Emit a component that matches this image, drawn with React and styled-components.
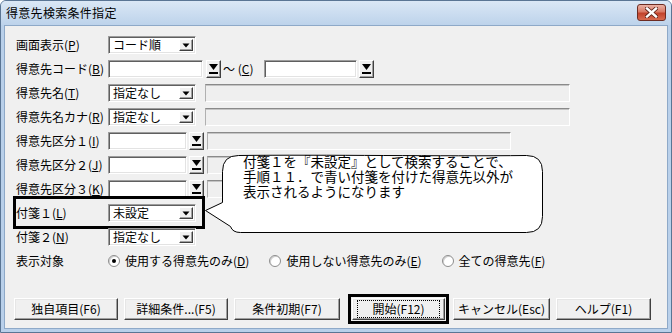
import React from "react";
import styled, { createGlobalStyle } from "styled-components";

const GlobalStyle = createGlobalStyle`
  html, body { margin: 0; padding: 0; background: #fff; }
  body {
    font-family: "Noto Sans CJK JP", "Liberation Sans", sans-serif;
    font-size: 12px;
    color: #000;
  }
`;

// window frame
const Window = styled.div`
  width: 672px;
  height: 333px;
  box-sizing: border-box;
  display: flex;
  flex-direction: column;
  border: 1px solid #5a7594;
  border-radius: 6px 6px 0 0;
  background: #b9d0ea;
  overflow: hidden;
`;

const TitleBar = styled.div`
  height: 24px;
  flex-shrink: 0;
  display: flex;
  align-items: center;
  justify-content: space-between;
  padding: 0 5px 0 5px;
  background: linear-gradient(#dae7f5, #bdd3eb);
`;

const Title = styled.span`
  font-size: 12px;
  letter-spacing: 0.3px;
  line-height: 1;
`;

const CloseBtn = styled.div`
  width: 29px;
  height: 17px;
  margin-top: -2px;
  box-sizing: border-box;
  border: 1px solid #6d2c22;
  border-radius: 3px;
  background: linear-gradient(#eab1a4 0%, #d97a66 45%, #c2432c 55%, #d86b50 100%);
  display: flex;
  align-items: center;
  justify-content: center;
`;

const Body = styled.div`
  position: relative;
  flex: 1;
  margin: 0 3px 3px 3px;
  border: 1px solid #8ea9c8;
  background: #f0f0f0;
  padding: 7px 0 0 11px;
`;

const Row = styled.div`
  position: relative;
  display: flex;
  align-items: center;
  height: 24px;
`;

const Label = styled.span`
  width: 92px;
  flex-shrink: 0;
  white-space: nowrap;
  line-height: 1;
`;

const sunken = `
  box-sizing: border-box;
  height: 18px;
  border: 1px solid;
  border-color: #9c9c9c #ffffff #ffffff #9c9c9c;
  box-shadow: inset 1px 1px #5f5f5f, inset -1px -1px #e3e3e3;
`;

const Combo = styled.div`
  ${sunken}
  width: ${(p) => p.w || 88}px;
  background: #fff;
  display: flex;
  align-items: center;
  padding: 0 2px 0 4px;
  line-height: 1;
`;

const ComboArrow = styled.div`
  margin-left: auto;
  width: 14px;
  height: 12px;
  box-sizing: border-box;
  background: #f0f0f0;
  border: 1px solid;
  border-color: #fff #404040 #404040 #fff;
  box-shadow: inset -1px -1px #a0a0a0;
  display: flex;
  align-items: center;
  justify-content: center;
`;

const TextBox = styled.div`
  ${sunken}
  width: ${(p) => p.w}px;
  background: #fff;
`;

const DropBtn = styled.div`
  width: 15px;
  height: 18px;
  margin-left: ${(p) => p.ml || 2}px;
  box-sizing: border-box;
  background: #f0f0f0;
  border: 1px solid;
  border-color: #fff #404040 #404040 #fff;
  box-shadow: inset -1px -1px #a0a0a0;
  display: flex;
  align-items: center;
  justify-content: center;
`;

const Field = styled.div`
  box-sizing: border-box;
  height: 18px;
  width: ${(p) => p.w}px;
  margin-left: ${(p) => p.ml || 9}px;
  border: 1px solid;
  border-color: #8a8a8a #ffffff #ffffff #b0b0b0;
  box-shadow: inset 0 1px #c4c4c4;
  background: #efefef;
`;

const Tilde = styled.span`
  width: 41px;
  flex-shrink: 0;
  padding-left: 2px;
  line-height: 1;
  white-space: nowrap;
`;

const Mark = styled.div`
  position: absolute;
  left: -3px;
  top: -5px;
  width: 192px;
  height: 33px;
  box-sizing: border-box;
  border: 3px solid #000;
  pointer-events: none;
`;

const RadioGroup = styled.div`
  display: flex;
  align-items: center;
  gap: 20px;
`;

const RadioItem = styled.label`
  display: flex;
  align-items: center;
  gap: 5px;
  line-height: 1;
  white-space: nowrap;
`;

const RadioDot = styled.span`
  width: 12px;
  height: 12px;
  box-sizing: border-box;
  border-radius: 50%;
  border: 1px solid #8d8d8d;
  background: #fff;
  box-shadow: inset 1px 1px #d0d0d0;
  display: flex;
  align-items: center;
  justify-content: center;
  &::after {
    content: "";
    width: 4px;
    height: 4px;
    border-radius: 50%;
    background: ${(p) => (p.$on ? "#000" : "transparent")};
  }
`;

const ButtonBar = styled.div`
  display: flex;
  align-items: center;
  margin-top: 21px;
  margin-left: -2px;
`;

const Button = styled.div`
  width: ${(p) => p.w}px;
  height: 22px;
  margin-right: ${(p) => (p.mr === undefined ? 6 : p.mr)}px;
  box-sizing: border-box;
  background: #f0f0f0;
  border: 1px solid;
  border-color: #fff #404040 #404040 #fff;
  box-shadow: inset -1px -1px #a0a0a0, inset 1px 1px #e6e6e6;
  display: flex;
  align-items: center;
  justify-content: center;
  line-height: 1;
  white-space: nowrap;
`;

const DefaultFrame = styled.div`
  box-sizing: border-box;
  border: 3px solid #000;
  padding: 1px;
  margin: 0 4px 0 8px;
  display: flex;
`;

const FocusRect = styled.span`
  border: 1px dotted #000;
  padding: 2px 14px;
  line-height: 1;
`;

const Callout = styled.div`
  position: absolute;
  left: 199px;
  top: 126px;
  width: 342px;
  height: 84px;
`;

const CalloutText = styled.div`
  position: absolute;
  left: 39px;
  top: 3px;
  font-family: "Liberation Sans", "Noto Sans CJK JP", sans-serif;
  font-size: 13.5px;
  line-height: 15.2px;
  white-space: nowrap;
`;

const Arrow = () => (
  <svg width="8" height="5" viewBox="0 0 8 5">
    <path d="M0.5 0.5 H7.5 L4 4.5 Z" fill="#000" />
  </svg>
);

const BarArrow = () => (
  <svg width="9" height="10" viewBox="0 0 9 10">
    <path d="M0 0 H9 L4.5 6 Z" fill="#000" />
    <rect x="0" y="8" width="9" height="2" fill="#000" />
  </svg>
);

const ComboBox = ({ value, w }) => (
  <Combo w={w}>
    <span>{value}</span>
    <ComboArrow>
      <Arrow />
    </ComboArrow>
  </Combo>
);

const Radio = ({ on, children }) => (
  <RadioItem>
    <RadioDot $on={on} />
    <span>{children}</span>
  </RadioItem>
);

const App = () => {
  return (
    <>
      <GlobalStyle />
      <Window>
        <TitleBar>
          <Title>得意先検索条件指定</Title>
          <CloseBtn>
            <svg width="13" height="11" viewBox="0 0 13 11">
              <path
                d="M2 1.5 L11 9.5 M11 1.5 L2 9.5"
                stroke="#5a2016"
                strokeWidth="4"
                strokeLinecap="square"
              />
              <path
                d="M2 1.5 L11 9.5 M11 1.5 L2 9.5"
                stroke="#fff"
                strokeWidth="2.4"
                strokeLinecap="square"
              />
            </svg>
          </CloseBtn>
        </TitleBar>

        <Body>
          <Row>
            <Label>画面表示(<u>P</u>)</Label>
            <ComboBox value="コード順" />
          </Row>
          <Row>
            <Label>得意先コード(<u>B</u>)</Label>
            <TextBox w={95} />
            <DropBtn ml={3}>
              <BarArrow />
            </DropBtn>
            <Tilde>～ (<u>C</u>)</Tilde>
            <TextBox w={93} />
            <DropBtn>
              <BarArrow />
            </DropBtn>
          </Row>
          <Row>
            <Label>得意先名(<u>T</u>)</Label>
            <ComboBox value="指定なし" />
            <Field w={365} />
          </Row>
          <Row>
            <Label>得意先名カナ(<u>R</u>)</Label>
            <ComboBox value="指定なし" />
            <Field w={365} />
          </Row>
          <Row>
            <Label>得意先区分１(<u>I</u>)</Label>
            <TextBox w={79} />
            <DropBtn>
              <BarArrow />
            </DropBtn>
            <Field w={304} ml={3} />
          </Row>
          <Row>
            <Label>得意先区分２(<u>J</u>)</Label>
            <TextBox w={79} />
            <DropBtn>
              <BarArrow />
            </DropBtn>
            <Field w={304} ml={3} />
          </Row>
          <Row>
            <Label>得意先区分３(<u>K</u>)</Label>
            <TextBox w={79} />
            <DropBtn>
              <BarArrow />
            </DropBtn>
            <Field w={304} ml={3} />
          </Row>
          <Row>
            <Label>付箋１(<u>L</u>)</Label>
            <ComboBox value="未設定" />
            <Mark />
          </Row>
          <Row>
            <Label>付箋２(<u>N</u>)</Label>
            <ComboBox value="指定なし" />
          </Row>
          <Row>
            <Label>表示対象</Label>
            <RadioGroup>
              <Radio on>
                使用する得意先のみ(<u>D</u>)
              </Radio>
              <Radio>
                使用しない得意先のみ(<u>E</u>)
              </Radio>
              <Radio>
                全ての得意先(<u>F</u>)
              </Radio>
            </RadioGroup>
          </Row>

          <ButtonBar>
            <Button w={104}>独自項目(F6)</Button>
            <Button w={104}>詳細条件...(F5)</Button>
            <Button w={106} mr={0}>条件初期(F7)</Button>
            <DefaultFrame>
              <Button w={93} mr={0}>
                <FocusRect>開始(F12)</FocusRect>
              </Button>
            </DefaultFrame>
            <Button w={97}>キャンセル(Esc)</Button>
            <Button w={95}>ヘルプ(F1)</Button>
          </ButtonBar>

          <Callout>
            <svg width="342" height="84" viewBox="0 0 342 84">
              <path
                d="M34.5 3.5 C120 2.5 240 4.5 322.5 3.5 Q338.5 3.5 338.5 19.5 L338.5 64.5 Q338.5 80.5 322.5 80.5 L36.5 80.5 Q28.5 80.5 26.5 74.5 L1.5 58.5 L18.5 50.5 L18.5 19.5 Q18.5 3.5 34.5 3.5 Z"
                fill="#fff"
                stroke="#000"
                strokeWidth="1"
              />
            </svg>
            <CalloutText>
              付箋１を『未設定』として検索することで、
              <br />
              手順１１．で青い付箋を付けた得意先以外が
              <br />
              表示されるようになります
            </CalloutText>
          </Callout>
        </Body>
      </Window>
    </>
  );
};

export default App;
